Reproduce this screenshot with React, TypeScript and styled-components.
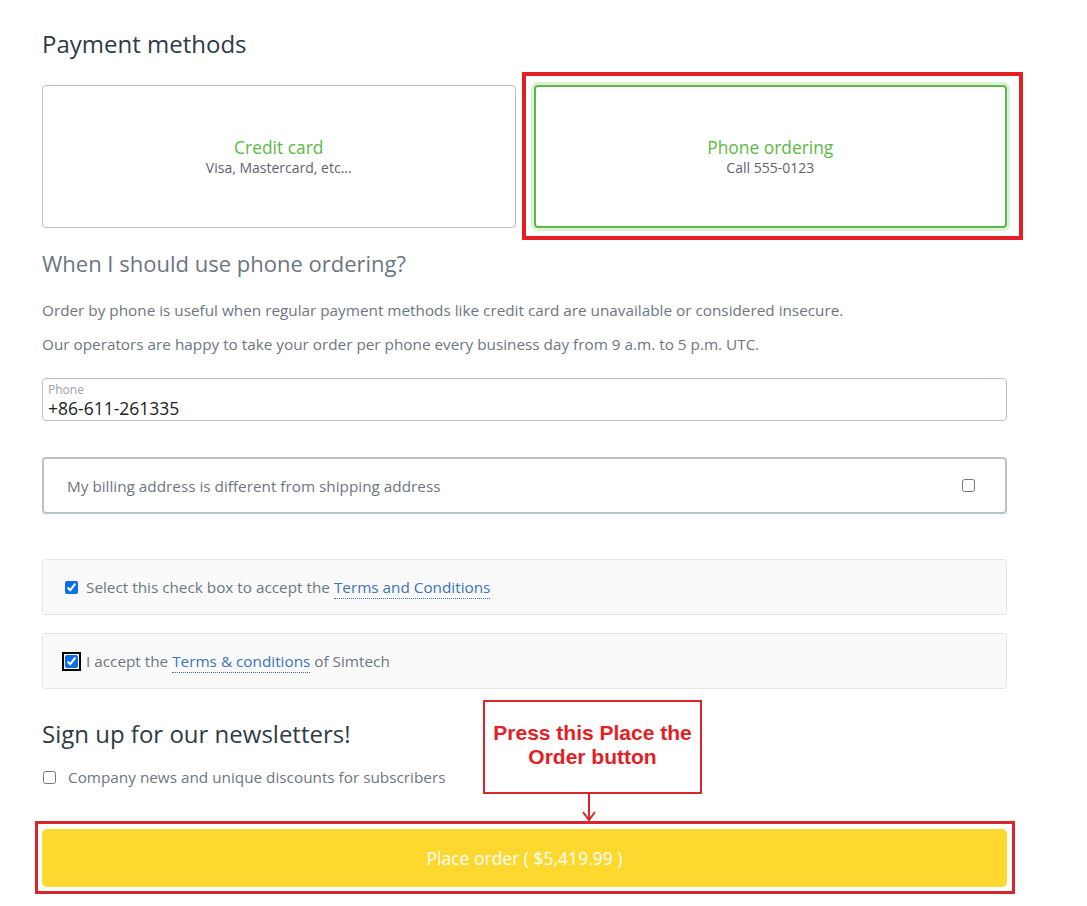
import React from 'react';
import styled, { createGlobalStyle } from 'styled-components';

const GlobalStyle = createGlobalStyle`
  html, body {
    margin: 0;
    padding: 0;
    background: #ffffff;
  }
  body {
    font-family: "Open Sans", "Noto Sans", sans-serif;
    color: #2f3a45;
  }
`;

const Page = styled.div`
  position: relative;
  width: 1087px;
  min-height: 906px;
  box-sizing: border-box;
  padding: 28px 80px 0 42px;
`;

const Title = styled.h2`
  margin: 0;
  font-size: 24px;
  font-weight: 400;
  line-height: 32px;
  color: #2f3a45;
`;

const Methods = styled.div`
  display: grid;
  grid-template-columns: 1fr 1fr;
  gap: 18px;
  margin-top: 25px;
`;

const MethodCard = styled.div<{ $active?: boolean }>`
  position: relative;
  height: 143px;
  box-sizing: border-box;
  border-radius: 4px;
  border: ${(p) => (p.$active ? '2px solid #5cb947' : '1px solid #b7c0c9')};
  box-shadow: ${(p) => (p.$active ? '0 0 0 3px #dcf1d6' : 'none')};
  display: flex;
  flex-direction: column;
  align-items: center;
  justify-content: center;
  background: #fff;
`;

const MethodName = styled.div`
  font-size: 17.4px;
  line-height: 22px;
  color: #5cb947;
`;

const MethodNote = styled.div`
  font-size: 14px;
  line-height: 19px;
  color: #5b6470;
`;

const Highlight = styled.div`
  position: absolute;
  inset: -15px -18px -14px -14px;
  border: 4px solid #e31e24;
  pointer-events: none;
`;

const SubTitle = styled.h3`
  margin: 19px 0 0;
  font-size: 22px;
  font-weight: 400;
  line-height: 32px;
  color: #6b7683;
`;

const Text = styled.p`
  margin: 0;
  font-size: 15.3px;
  line-height: 34px;
  color: #6c7682;
  &:first-of-type {
    margin-top: 14px;
  }
`;

const PhoneField = styled.div`
  margin-top: 17px;
  height: 43px;
  box-sizing: border-box;
  border: 1px solid #b7c0c9;
  border-radius: 4px;
  padding: 4px 5px 0;
`;

const FieldLabel = styled.div`
  font-size: 12px;
  line-height: 14px;
  color: #9aa2ab;
`;

const FieldValue = styled.div`
  font-size: 17.5px;
  line-height: 22px;
  color: #1b1e21;
`;

const BillingBox = styled.label`
  margin-top: 36px;
  height: 57px;
  box-sizing: border-box;
  border: 2px solid #b9c2ca;
  border-radius: 4px;
  display: flex;
  align-items: center;
  justify-content: space-between;
  padding: 0 30px 0 23px;
  font-size: 15.3px;
  color: #6c7682;
`;

const Check = styled.input<{ $focused?: boolean }>`
  width: 13px;
  height: 13px;
  margin: 0;
  accent-color: #0b6fe8;
  outline: ${(p) => (p.$focused ? '2px solid #000' : 'none')};
  outline-offset: 1px;
  border-radius: 2px;
  flex-shrink: 0;
`;

const TermsBox = styled.label<{ $first?: boolean }>`
  margin-top: ${(p) => (p.$first ? '45px' : '18px')};
  height: 56px;
  box-sizing: border-box;
  border: 1px solid #e5e8eb;
  border-radius: 3px;
  background: #fafafa;
  display: flex;
  align-items: center;
  gap: 8px;
  padding: 0 22px;
  font-size: 15.3px;
  color: #6c7682;
`;

const TermsLink = styled.a`
  color: #3b73b9;
  text-decoration: none;
  border-bottom: 1px dotted #3b73b9;
  padding-bottom: 1px;
`;

const NewsTitle = styled.h2`
  margin: 29px 0 0;
  font-size: 24px;
  font-weight: 400;
  line-height: 32px;
  color: #2f3a45;
`;

const NewsRow = styled.label`
  margin-top: 17px;
  display: flex;
  align-items: center;
  gap: 12px;
  padding-left: 1px;
  font-size: 15.3px;
  line-height: 20px;
  color: #6c7682;
`;

const ButtonWrap = styled.div`
  position: relative;
  margin-top: 42px;
`;

const PlaceButton = styled.button`
  width: 100%;
  height: 58px;
  border: none;
  border-radius: 5px;
  background: #fdd82f;
  color: #ffffff;
  font-family: "Open Sans", sans-serif;
  font-size: 17.5px;
  cursor: pointer;
`;

const ButtonHighlight = styled.div`
  position: absolute;
  inset: -8px -8px -7px -7px;
  border: 3px solid #d9262c;
  pointer-events: none;
`;

const Callout = styled.div`
  position: absolute;
  left: 483px;
  top: 700px;
  width: 219px;
  height: 94px;
  box-sizing: border-box;
  border: 2px solid #d9262c;
  background: #fff;
  display: flex;
  align-items: flex-start;
  justify-content: center;
  padding-top: 19px;
  text-align: center;
  font-family: "Liberation Sans", Arial, sans-serif;
  font-weight: 700;
  font-size: 21px;
  line-height: 24px;
  color: #e31e24;
`;

const Arrow = styled.svg`
  position: absolute;
  left: 581px;
  top: 792px;
`;

export default function App() {
  return (
    <>
      <GlobalStyle />
      <Page>
        <Title>Payment methods</Title>
        <Methods>
          <MethodCard>
            <MethodName>Credit card</MethodName>
            <MethodNote>Visa, Mastercard, etc...</MethodNote>
          </MethodCard>
          <MethodCard $active>
            <MethodName>Phone ordering</MethodName>
            <MethodNote>Call 555-0123</MethodNote>
            <Highlight />
          </MethodCard>
        </Methods>

        <SubTitle>When I should use phone ordering?</SubTitle>
        <Text>
          Order by phone is useful when regular payment methods like credit card are unavailable or
          considered insecure.
        </Text>
        <Text>
          Our operators are happy to take your order per phone every business day from 9 a.m. to 5
          p.m. UTC.
        </Text>

        <PhoneField>
          <FieldLabel>Phone</FieldLabel>
          <FieldValue>+86-611-261335</FieldValue>
        </PhoneField>

        <BillingBox>
          <span>My billing address is different from shipping address</span>
          <Check type="checkbox" readOnly />
        </BillingBox>

        <TermsBox $first>
          <Check type="checkbox" defaultChecked />
          <span>
            Select this check box to accept the <TermsLink>Terms and Conditions</TermsLink>
          </span>
        </TermsBox>
        <TermsBox>
          <Check type="checkbox" defaultChecked $focused />
          <span>
            I accept the <TermsLink>Terms &amp; conditions</TermsLink> of Simtech
          </span>
        </TermsBox>

        <NewsTitle>Sign up for our newsletters!</NewsTitle>
        <NewsRow>
          <Check type="checkbox" />
          <span>Company news and unique discounts for subscribers</span>
        </NewsRow>

        <ButtonWrap>
          <PlaceButton>Place order ( $5,419.99 )</PlaceButton>
          <ButtonHighlight />
        </ButtonWrap>

        <Callout>
          Press this Place the
          <br />
          Order button
        </Callout>
        <Arrow width="16" height="30" viewBox="0 0 16 30">
          <path d="M8 0 V27" stroke="#d9262c" strokeWidth="2" fill="none" />
          <path d="M2 20 L8 28 L14 20" stroke="#d9262c" strokeWidth="2" fill="none" />
        </Arrow>
      </Page>
    </>
  );
}
